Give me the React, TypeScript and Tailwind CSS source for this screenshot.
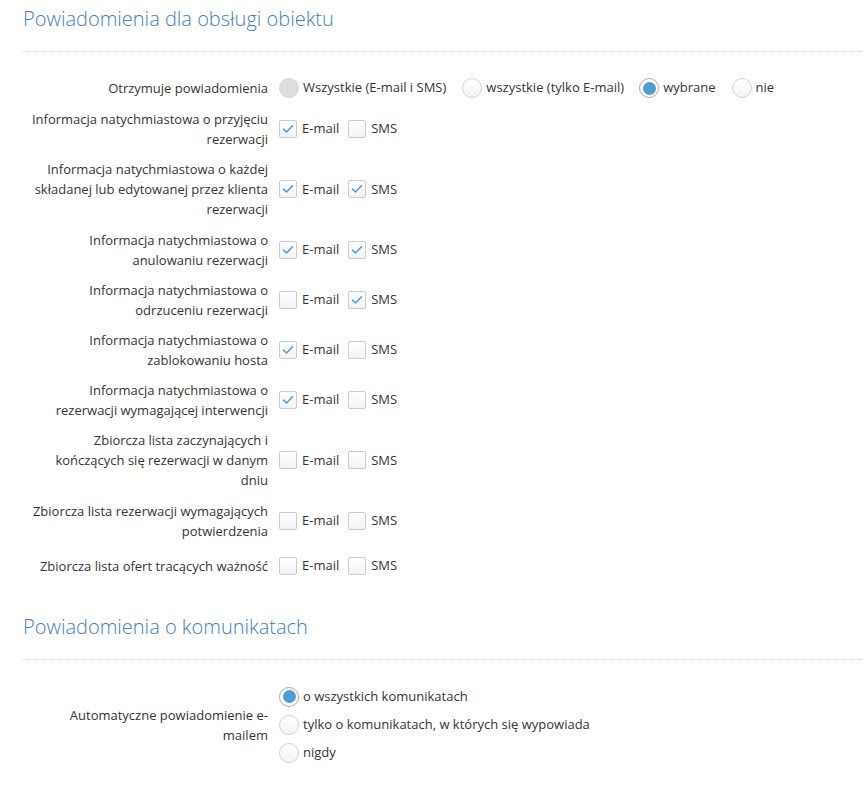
import { ReactNode } from "react";

type Row = { label: string; email: boolean; sms: boolean };

const rows: Row[] = [
  { label: "Informacja natychmiastowa o przyjęciu rezerwacji", email: true, sms: false },
  { label: "Informacja natychmiastowa o każdej składanej lub edytowanej przez klienta rezerwacji", email: true, sms: true },
  { label: "Informacja natychmiastowa o anulowaniu rezerwacji", email: true, sms: true },
  { label: "Informacja natychmiastowa o odrzuceniu rezerwacji", email: false, sms: true },
  { label: "Informacja natychmiastowa o zablokowaniu hosta", email: true, sms: false },
  { label: "Informacja natychmiastowa o rezerwacji wymagającej interwencji", email: true, sms: false },
  { label: "Zbiorcza lista zaczynających i kończących się rezerwacji w danym dniu", email: false, sms: false },
  { label: "Zbiorcza lista rezerwacji wymagających potwierdzenia", email: false, sms: false },
  { label: "Zbiorcza lista ofert tracących ważność", email: false, sms: false },
];

function Checkbox({ checked }: { checked: boolean }) {
  return (
    <span className="flex h-[18px] w-[18px] shrink-0 items-center justify-center rounded-[2px] border border-[#c9ccd0] bg-gradient-to-b from-white to-[#f3f3f3]">
      {checked && (
        <svg width="12" height="10" viewBox="0 0 12 10" aria-hidden="true">
          <path d="M1.5 5.2 4.5 8 10.5 1.8" fill="none" stroke="#4aa0da" strokeWidth="1.6" strokeLinecap="round" strokeLinejoin="round" />
        </svg>
      )}
    </span>
  );
}

function Radio({ checked, disabled }: { checked?: boolean; disabled?: boolean }) {
  if (disabled) {
    return <span className="h-[20px] w-[20px] shrink-0 rounded-full border border-[#d6d6d6] bg-[#dedede]" />;
  }
  return (
    <span
      className={
        checked
          ? "flex h-[20px] w-[20px] shrink-0 items-center justify-center rounded-full border border-[#a9a9a9] bg-white"
          : "h-[20px] w-[20px] shrink-0 rounded-full border border-[#d2d2d2] bg-gradient-to-b from-white to-[#f4f4f4]"
      }
    >
      {checked && <span className="h-[13px] w-[13px] rounded-full bg-[#4a9fd6]" />}
    </span>
  );
}

function Section({ title }: { title: string }) {
  return (
    <div>
      <h2 className="text-[20px] font-light leading-[30px] text-[#3f7fc2]">{title}</h2>
      <div className="mt-[17px] border-t border-dotted border-[#d9d9d9]" />
    </div>
  );
}

function FormRow({ label, children, minH = "min-h-[30px]" }: { label: string; children: ReactNode; minH?: string }) {
  return (
    <div className={`flex items-center gap-[11px] ${minH}`}>
      <div className="w-[241px] shrink-0 pl-[1px] text-right leading-[20px]">{label}</div>
      <div className="flex items-center">{children}</div>
    </div>
  );
}

function Channel({ checked, text, first }: { checked: boolean; text: string; first?: boolean }) {
  return (
    <label className={first ? "flex items-center gap-[5px]" : "ml-[9px] flex items-center gap-[5px]"}>
      <Checkbox checked={checked} />
      <span>{text}</span>
    </label>
  );
}

export default function App() {
  return (
    <div
      className="min-h-[791px] bg-white pl-[27px] pt-[4px] text-[13px] text-[#353535]"
      style={{ fontFamily: '"Open Sans", "Noto Sans", sans-serif' }}
    >
      <div className="-ml-[4px]">
        <Section title="Powiadomienia dla obsługi obiektu" />
      </div>

      <div className="mt-[25px] flex flex-col gap-[10.2px]">
        <FormRow label="Otrzymuje powiadomienia" minH="min-h-[22px]">
          <label className="flex items-center gap-[4px]">
            <Radio disabled />
            <span>Wszystkie (E-mail i SMS)</span>
          </label>
          <label className="ml-[16px] flex items-center gap-[4px]">
            <Radio />
            <span>wszystkie (tylko E-mail)</span>
          </label>
          <label className="ml-[15px] flex items-center gap-[4px]">
            <Radio checked />
            <span>wybrane</span>
          </label>
          <label className="ml-[16px] flex items-center gap-[4px]">
            <Radio />
            <span>nie</span>
          </label>
        </FormRow>

        {rows.map((r) => (
          <FormRow key={r.label} label={r.label}>
            <Channel checked={r.email} text="E-mail" first />
            <Channel checked={r.sms} text="SMS" />
          </FormRow>
        ))}
      </div>

      <div className="-ml-[4px] mt-[31px]">
        <Section title="Powiadomienia o komunikatach" />
      </div>

      <div className="mt-[23px] flex items-center gap-[11px]">
        <div className="w-[241px] shrink-0 pl-[1px] text-right leading-[20px]">Automatyczne powiadomienie e-mailem</div>
        <div className="flex flex-col">
          <label className="flex h-[28px] items-center gap-[4px]">
            <Radio checked />
            <span>o wszystkich komunikatach</span>
          </label>
          <label className="flex h-[28px] items-center gap-[4px]">
            <Radio />
            <span>tylko o komunikatach, w których się wypowiada</span>
          </label>
          <label className="flex h-[28px] items-center gap-[4px]">
            <Radio />
            <span>nigdy</span>
          </label>
        </div>
      </div>
    </div>
  );
}
